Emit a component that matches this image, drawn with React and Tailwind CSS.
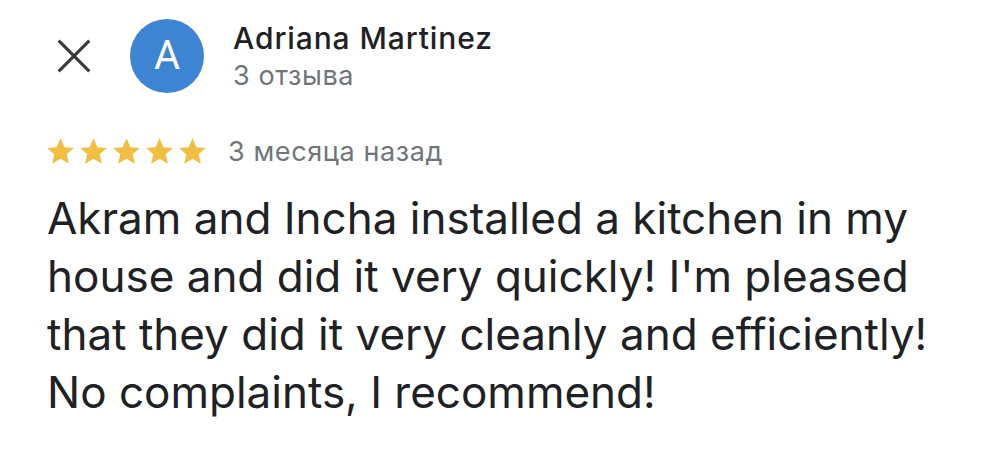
import React from "react";

const Star = () => (
  <svg viewBox="0 0 24 24" className="w-[31px] h-[31px]" fill="#F2BE42">
    <path d="M12 1.8l3 6.9 7.4.6-5.6 4.9 1.7 7.3L12 17.6l-6.5 3.9 1.7-7.3-5.6-4.9 7.4-.6z" />
  </svg>
);

const App = () => {
  return (
    <div className="w-[1000px] h-[454px] bg-white overflow-hidden font-['Inter',sans-serif] pl-[47px] pt-[19px]">
      {/* Header */}
      <div className="flex items-start">
        <div className="h-[74px] w-[50px] flex items-center pl-[9px]">
          <svg viewBox="0 0 40 40" className="w-[36px] h-[36px]" stroke="#3a3a3a" strokeWidth="3.4" fill="none">
            <path d="M3 3l34 34M37 3L3 37" />
          </svg>
        </div>
        <div className="ml-[33px] w-[74px] h-[74px] rounded-full bg-[#3d85d2] flex items-center justify-center text-white text-[40px] font-['Roboto',sans-serif]">
          A
        </div>
        <div className="ml-[29px] mt-[1px] flex flex-col">
          <span className="text-[#202124] text-[30px] leading-[36px] font-medium tracking-[0.9px]">Adriana Martinez</span>
          <span className="mt-[5px] text-[#70757a] text-[27px] leading-[30px] tracking-[0.6px]">3 отзыва</span>
        </div>
      </div>

      {/* Rating */}
      <div className="flex items-center mt-[43px]">
        <div className="flex gap-[2px] -ml-[2px]">
          <Star />
          <Star />
          <Star />
          <Star />
          <Star />
        </div>
        <span className="ml-[20px] text-[#70757a] text-[27px] leading-[30px] tracking-[0.6px]">3 месяца назад</span>
      </div>

      {/* Body */}
      <p className="mt-[22px] text-[#202124] text-[44px] leading-[58px] whitespace-nowrap">
        Akram and Incha installed a kitchen in my
        <br />
        house and did it very quickly! I'm pleased
        <br />
        that they did it very cleanly and efficiently!
        <br />
        No complaints, I recommend!
      </p>
    </div>
  );
};

export default App;
